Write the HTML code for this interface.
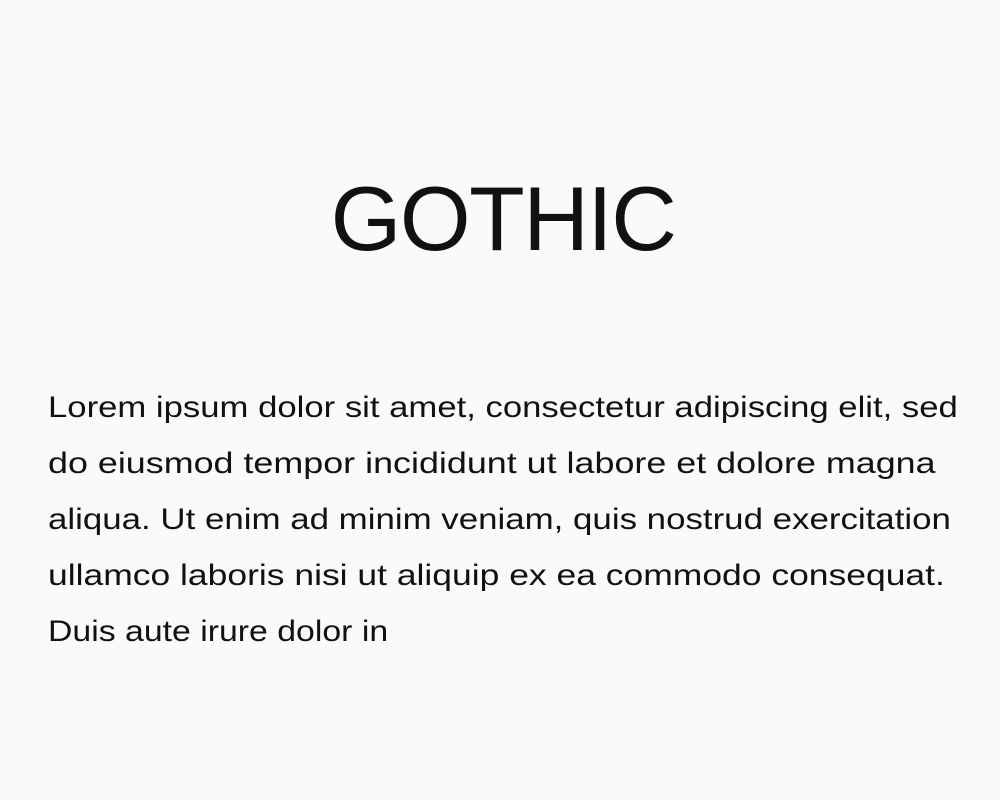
<!DOCTYPE html>
<html><head><meta charset="utf-8"><style>
html,body{margin:0;padding:0;width:1000px;height:800px;background:#fafafa;overflow:hidden}
body{font-family:"Liberation Sans",sans-serif;color:#111}
h1{position:absolute;left:3px;width:1000px;top:165px;margin:0;text-align:center;font-weight:400;font-size:91px;line-height:110px;letter-spacing:-1.5px}
.l{position:absolute;left:48px;font-size:30px;line-height:40px;white-space:nowrap;transform-origin:0 50%}
</style></head><body>
<h1>GOTHIC</h1>
<div class="l" style="top:388px;transform:scaleX(1.156)">Lorem ipsum dolor sit amet, consectetur adipiscing elit, sed</div>
<div class="l" style="top:444px;transform:scaleX(1.196)">do eiusmod tempor incididunt ut labore et dolore magna</div>
<div class="l" style="top:500px;transform:scaleX(1.162)">aliqua. Ut enim ad minim veniam, quis nostrud exercitation</div>
<div class="l" style="top:556px;transform:scaleX(1.182)">ullamco laboris nisi ut aliquip ex ea commodo consequat.</div>
<div class="l" style="top:612px;transform:scaleX(1.127)">Duis aute irure dolor in</div>
</body></html>
